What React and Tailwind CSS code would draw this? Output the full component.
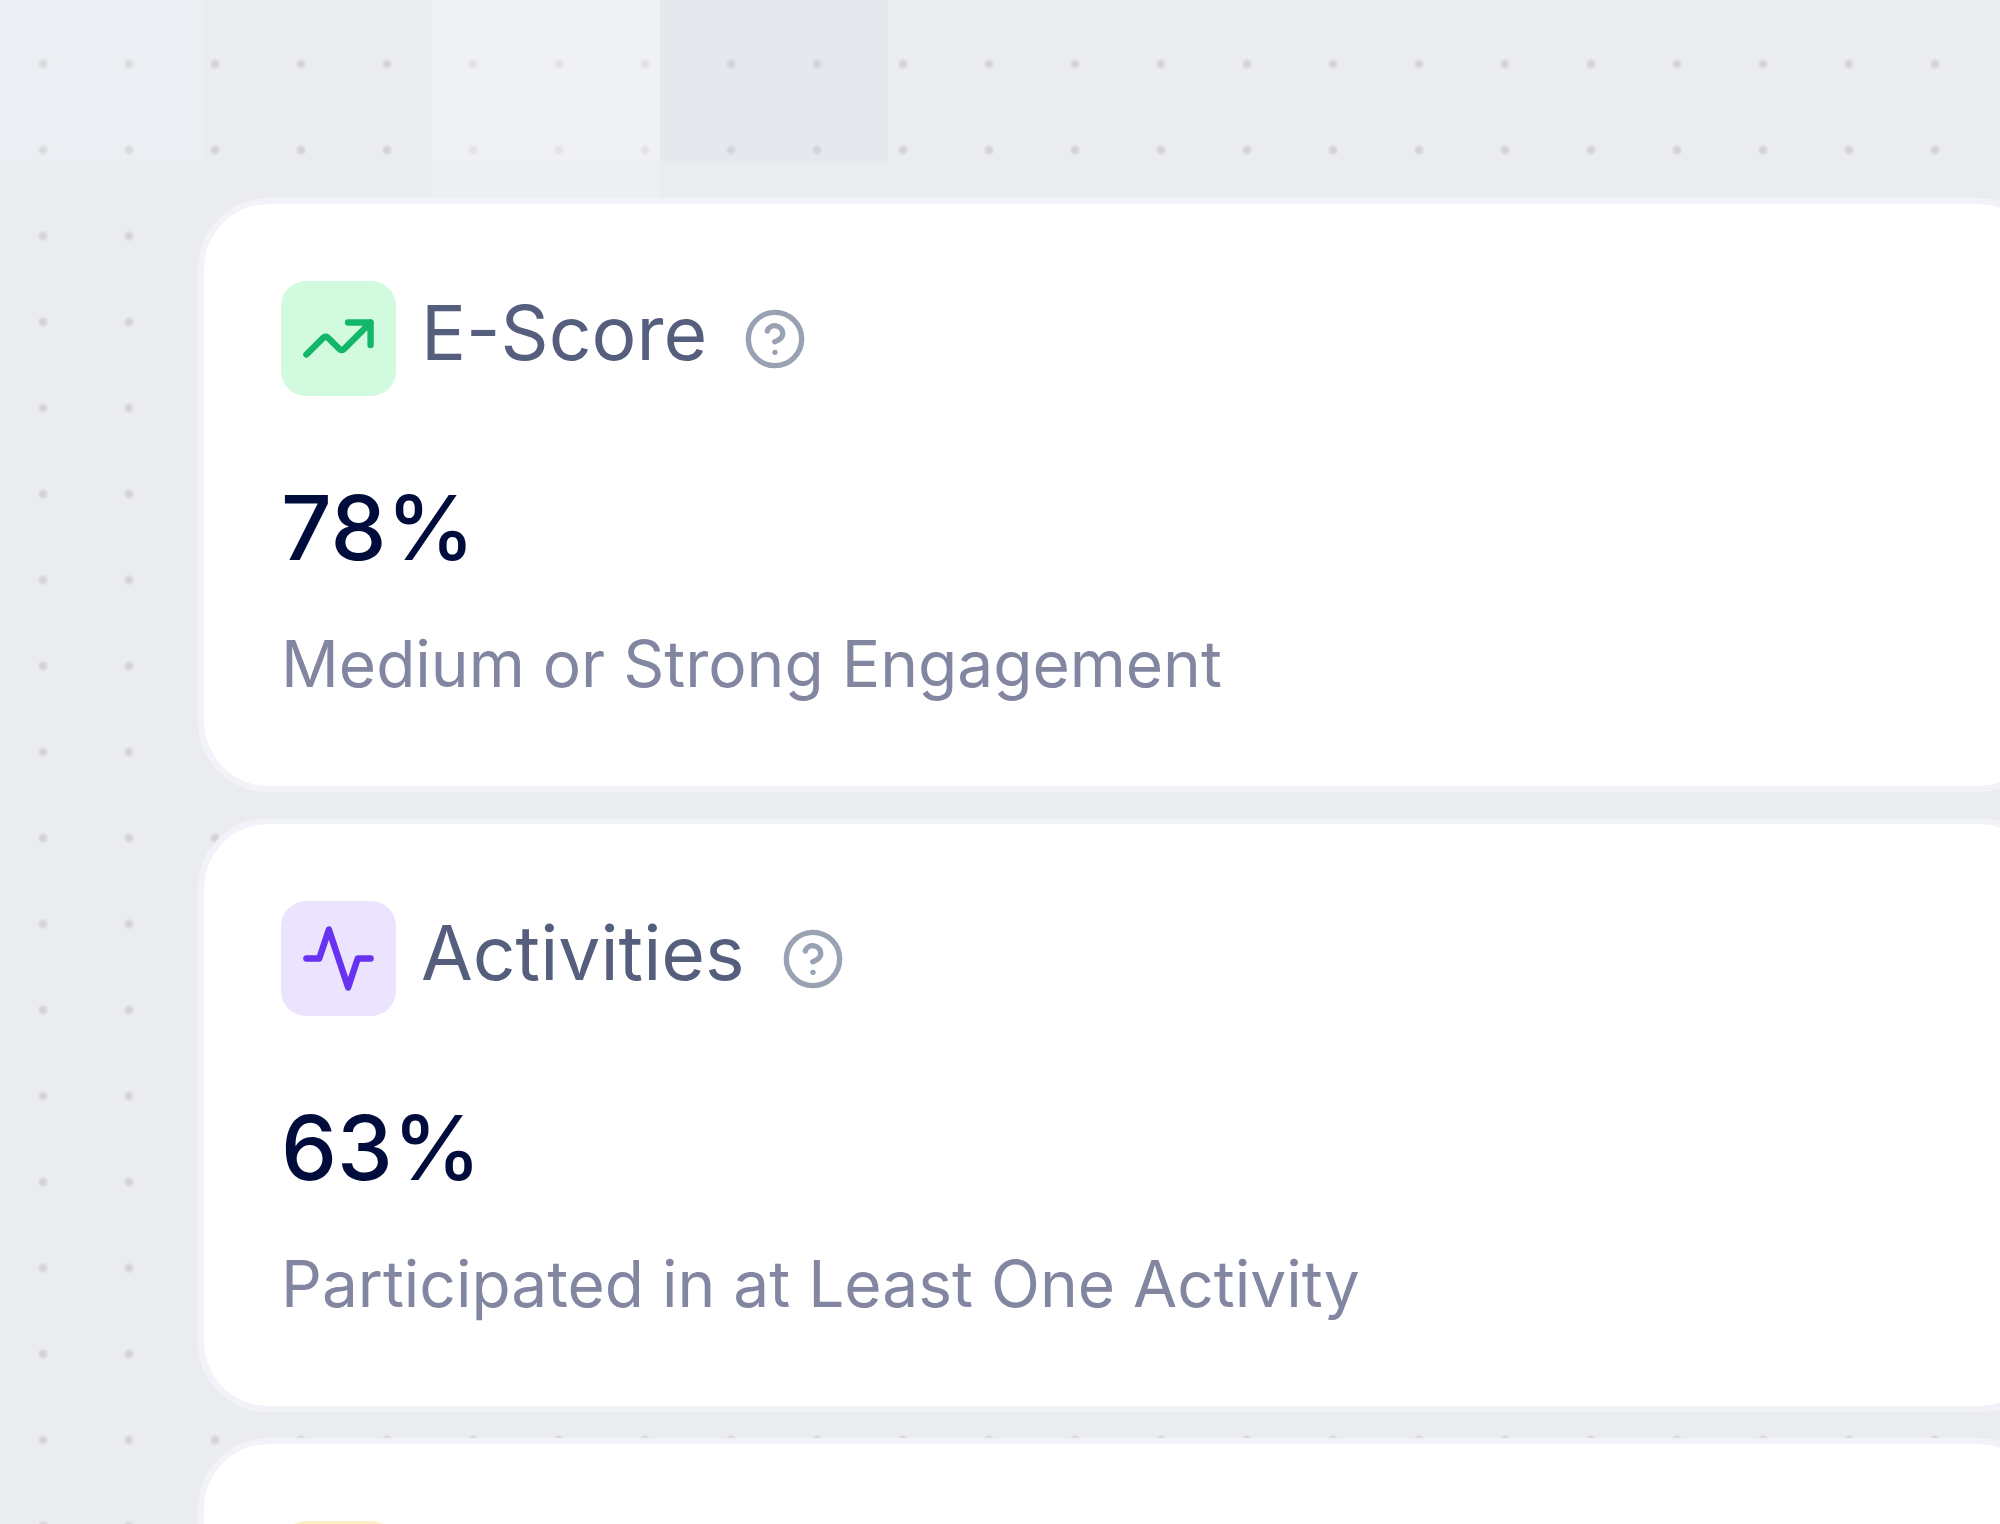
import React from 'react';
import { CircleHelp } from 'lucide-react';

const TrendIcon = () => (
  <svg viewBox="0 0 24 24" className="size-[77px]" fill="none" stroke="currentColor" strokeWidth="2" strokeLinecap="round" strokeLinejoin="round">
    <path d="M22 7L14.1314 14.8686C13.7354 15.2646 13.5373 15.4627 13.309 15.5368C13.1082 15.6021 12.8918 15.6021 12.691 15.5368C12.4627 15.4627 12.2646 15.2646 11.8686 14.8686L9.13137 12.1314C8.73535 11.7354 8.53735 11.5373 8.30902 11.4632C8.10817 11.3979 7.89183 11.3979 7.69098 11.4632C7.46265 11.5373 7.26465 11.7354 6.86863 12.1314L2 17M22 7H15M22 7V14" />
  </svg>
);

const PulseIcon = () => (
  <svg viewBox="0 0 24 24" className="size-[77px]" fill="none" stroke="currentColor" strokeWidth="2" strokeLinecap="round" strokeLinejoin="round">
    <path d="M22 12H18L15 21L9 3L6 12H2" />
  </svg>
);

const stats = [
  {
    title: 'E-Score',
    value: '78%',
    caption: 'Medium or Strong Engagement',
    icon: <TrendIcon />,
    tone: 'bg-[#d1fadf] text-[#12b76a]',
  },
  {
    title: 'Activities',
    value: '63%',
    caption: 'Participated in at Least One Activity',
    icon: <PulseIcon />,
    tone: 'bg-[#ece4fe] text-[#6733f0]',
  },
];

const Card = ({ children }) => (
  <section className="rounded-[70px] border-6 border-[#f2f3f8] bg-white bg-clip-padding p-[77px]">
    {children}
  </section>
);

const IconBox = ({ tone, children }) => (
  <span className={`flex size-[115px] shrink-0 items-center justify-center rounded-[25px] ${tone}`}>
    {children}
  </span>
);

const StatCard = ({ title, value, caption, icon, tone }) => (
  <Card>
    <div className="flex items-center">
      <IconBox tone={tone}>{icon}</IconBox>
      <h2 className="ml-[25px] pb-3 text-[75px] leading-[80px] text-[#555e7d]">{title}</h2>
      <button type="button" aria-label={`About ${title}`} className="ml-9 text-[#98a2b3]">
        <CircleHelp className="size-16" />
      </button>
    </div>
    <p className="mt-[77px] text-[89px] leading-[110px] font-medium text-[#000c3b]">{value}</p>
    <p className="mt-9 text-[64px] leading-[90px] text-[#8286a0]">{caption}</p>
  </Card>
);

// tinted squares along the top edge, see-through so the dots stay visible
const Tiles = () => (
  <div className="flex h-[198px]" aria-hidden="true">
    <div className="h-[161px] w-[204px] bg-[#eafaff]/20" />
    <div className="w-[228px]" />
    <div className="w-[228px] bg-[#f7f8ff]/25">
      <div className="h-[160px] bg-[#f8faff]/20" />
    </div>
    <div className="h-[161px] w-[228px] bg-[#cddde5]/20" />
  </div>
);

const App = () => {
  return (
    <main className="h-screen overflow-hidden bg-[#ebecef] bg-[radial-gradient(circle,#d2d3d7_2px,#d2d3d700_6px)] bg-[length:86px_86px] bg-[position:0_21px] font-['Inter',sans-serif]">
      <Tiles />
      <div className="-mr-[50px] ml-[198px] flex flex-col gap-[26px]">
        {stats.map((stat) => (
          <StatCard key={stat.title} {...stat} />
        ))}
        <Card>
          <IconBox tone="bg-[#feefc6]" />
        </Card>
      </div>
    </main>
  );
};

export default App;
